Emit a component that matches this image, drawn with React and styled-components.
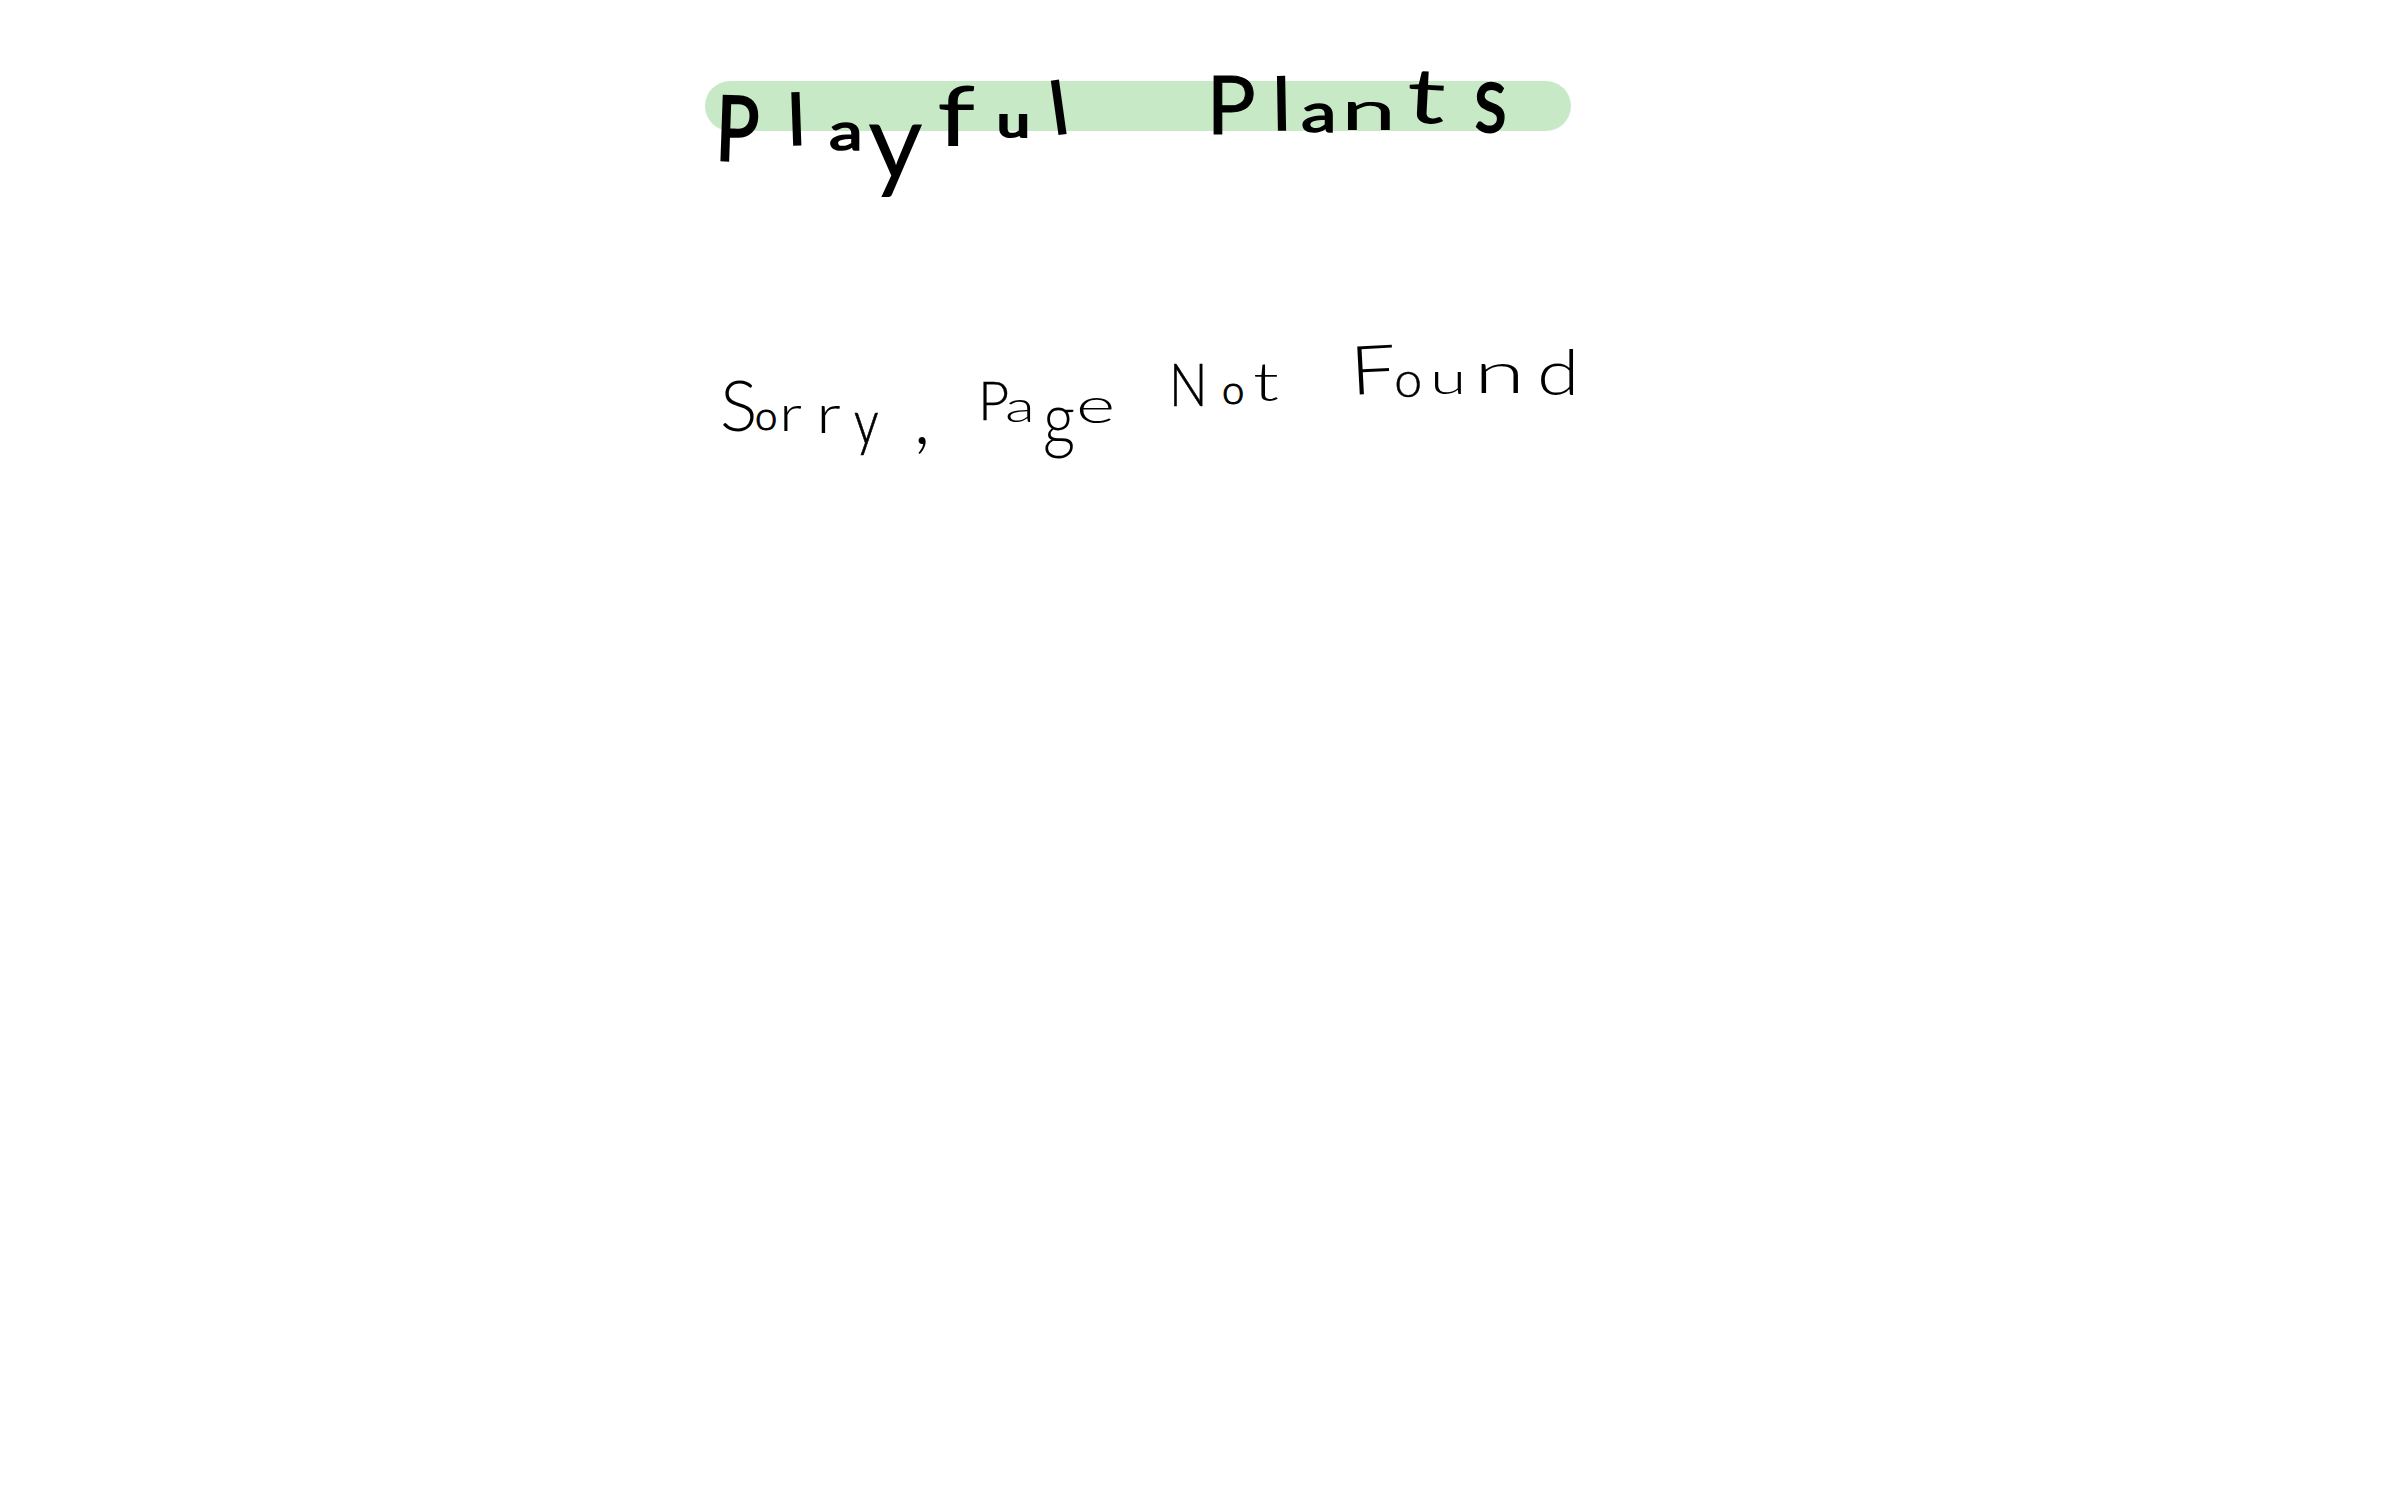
import React from 'react';
import styled, { createGlobalStyle } from 'styled-components';

const GlobalStyle = createGlobalStyle`
    html, body { margin: 0; background: #fff; }
    body { font-family: 'Lato', 'Open Sans', sans-serif; color: #000; }
`;

// hand lettering: [char, ink left x, baseline y, font size, tilt, horizontal stretch]
const TITLE = [
    ['P', 722, 158, 90, 2, 0.8], ['l', 793, 143, 70, -2, 1], ['a', 832, 148, 52, 0, 1.3], ['y', 875, 177, 107, 0, 1],
    ['f', 943, 144, 84, 0, 1.3], ['u', 1000, 135, 42, 0, 1.4], ['l', 1055, 133, 72, -8, 1], [' ', 1090, 133, 48, 0, 1],
    ['P', 1212, 132, 82, 0, 1], ['l', 1278, 128, 72, -1, 1], ['a', 1305, 130, 55, 0, 1.3], ['n', 1345, 128, 55, 0, 1.8],
    ['t', 1412, 120, 77, 3, 1.4], ['s', 1480, 130, 95, 0, 0.8],
];

const SUBTITLE = [
    ['S', 725, 433, 70, 0, 1], ['o', 758, 432, 40, 0, 1], ['r', 783, 433, 50, 0, 1.3], ['r', 820, 435, 54, 0, 1.3],
    ['y', 858, 446, 61, 0, 0.8], [',', 919, 446, 80, 0, 1], [' ', 950, 446, 40, 0, 1],
    ['P', 982, 422, 54, 0, 1], ['a', 1008, 424, 44, 0, 1.4], ['g', 1048, 447, 74, 0, 0.85], ['e', 1080, 425, 50, 0, 1.5], [' ', 1130, 425, 40, 0, 1],
    ['N', 1173, 408, 60, 0, 0.85], ['o', 1225, 406, 40, 0, 1], ['t', 1257, 403, 54, 0, 1.4], [' ', 1300, 403, 40, 0, 1],
    ['F', 1355, 397, 68, -3, 1.2], ['o', 1398, 399, 50, 0, 1], ['u', 1433, 396, 44, 0, 1.5], ['n', 1478, 395, 58, 0, 1.6], ['d', 1542, 397, 64, 0, 1.2],
];

const Page = styled.main`
    min-height: 100vh;
    box-sizing: border-box;
    padding: 81px 0 0 705px;
`;

const Banner = styled.div`
    width: 866px;
    height: 50px;
    border-radius: 25px;
    background: #c8e9c6;
    padding-left: 11px;
    box-sizing: border-box;
`;

const Title = styled.h1`
    margin: 0;
    display: flex;
    align-items: baseline;
    height: 50px;
    font-size: inherit;
    font-weight: 400;
    line-height: 0;
    padding-top: 30px;
    box-sizing: border-box;
`;

const Message = styled.p`
    margin: 256px 0 0 15px;
    display: flex;
    align-items: baseline;
    height: 40px;
    font-weight: 300;
    line-height: 0;
`;

const Letter = styled.span`
    flex: none;
    display: block;
    white-space: pre;
    width: ${(p) => p.$w}px;
    font-size: ${(p) => p.$size}px;
    -webkit-text-stroke: ${(p) => p.$stroke}px #000;
    transform-origin: 0 0;
    transform: translateY(${(p) => p.$dy}px) rotate(${(p) => p.$tilt}deg) scaleX(${(p) => p.$stretch});
`;

// side bearing of the font, so that x is where the ink starts
const lead = (size) => size * 0.07;

function Lettering({ letters, baseline, pen, stem }) {
    return letters.map(([ch, x, y, size, tilt, stretch], i) => {
        const next = letters[i + 1];
        return (
            <Letter
                key={i}
                $w={next ? next[1] - lead(next[3]) - (x - lead(size)) : size}
                $size={size}
                $stroke={Math.max(0, pen / stretch - stem * size).toFixed(2)}
                $dy={y - baseline}
                $tilt={tilt}
                $stretch={stretch}
            >
                {ch}
            </Letter>
        );
    });
}

export default function App() {
    return (
        <Page>
            <GlobalStyle />
            <Banner>
                <Title>
                    <Lettering letters={TITLE} baseline={150} pen={9} stem={0.1} />
                </Title>
            </Banner>
            <Message>
                <Lettering letters={SUBTITLE} baseline={420} pen={3} stem={0.05} />
            </Message>
        </Page>
    );
}
